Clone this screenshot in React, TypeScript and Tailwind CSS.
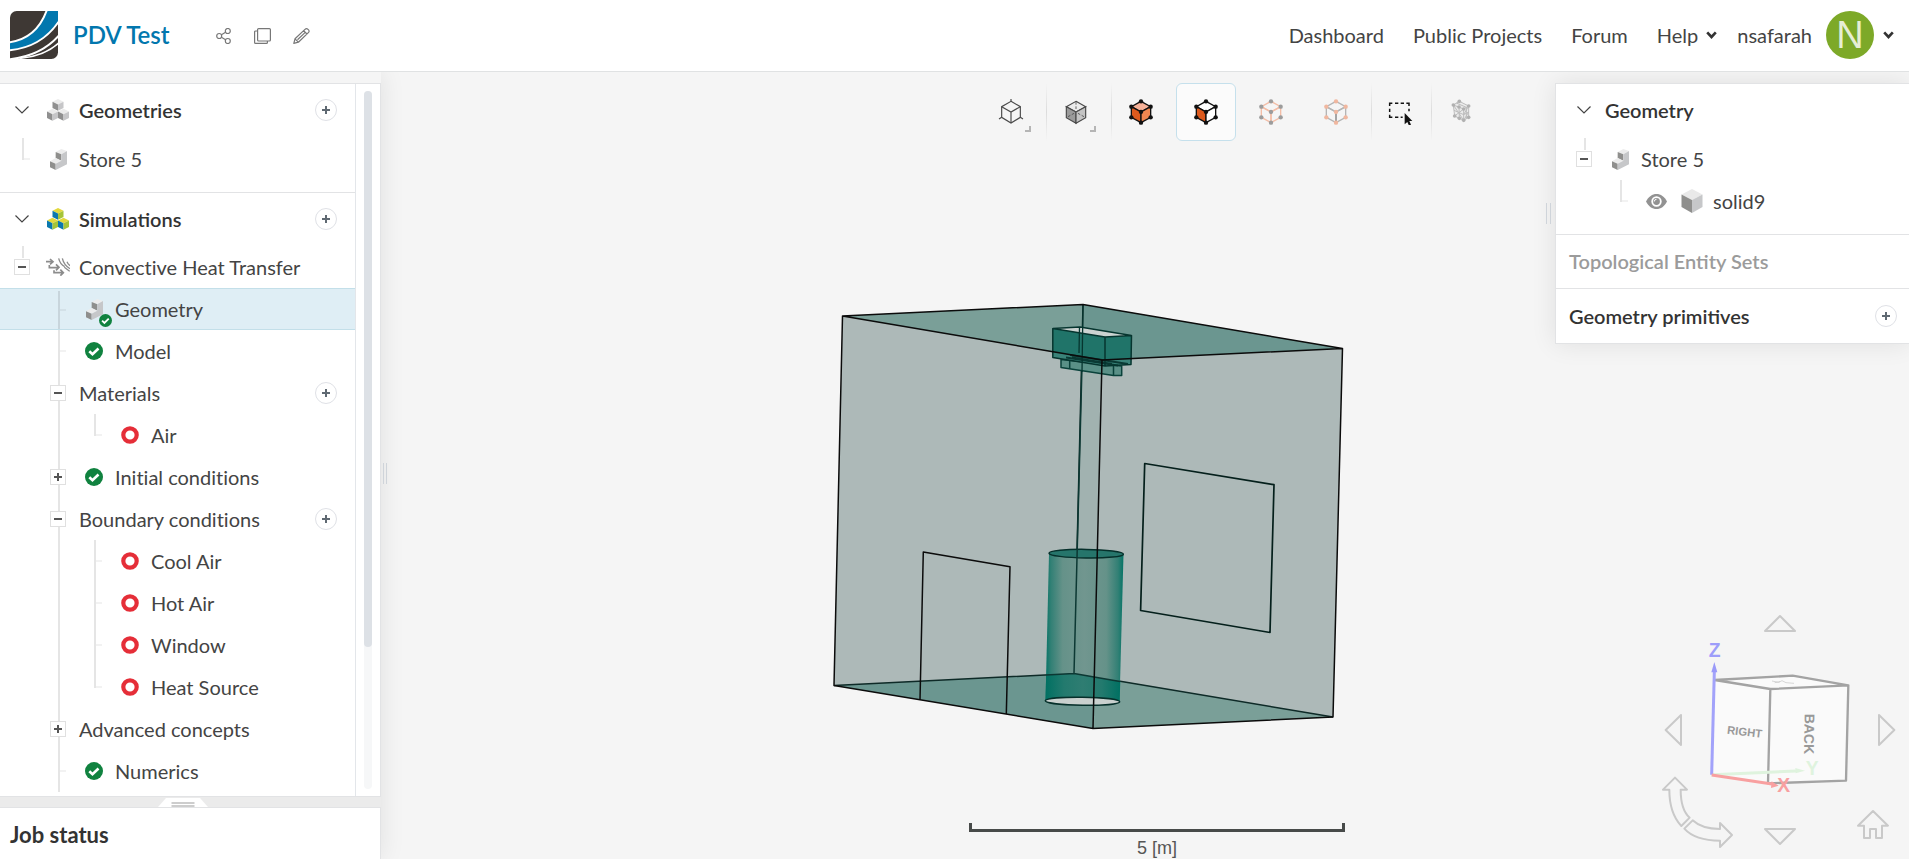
import type { ReactNode } from "react";

type Shades = { top: string; left: string; right: string };
const GREY: Shades = { top: "#ebebeb", left: "#8f8f8f", right: "#c6c6c8" };
const COLOR: Shades = { top: "#e2d83c", left: "#0b78ae", right: "#a6c437" };

function Cube({ x, y, s, shades }: { x: number; y: number; s: number; shades: Shades }) {
  const h = s / 2;
  const d = s * 1.15;
  const pts = (list: number[][]) => list.map(([a, b]) => `${x + a},${y + b}`).join(" ");
  return (
    <g>
      <polygon fill={shades.top} points={pts([[0, 0], [s, h], [0, s], [-s, h]])} />
      <polygon fill={shades.left} points={pts([[-s, h], [0, s], [0, s + d], [-s, h + d]])} />
      <polygon fill={shades.right} points={pts([[s, h], [0, s], [0, s + d], [s, h + d]])} />
    </g>
  );
}

function CubesIcon({ shades }: { shades: Shades }) {
  return (
    <svg width="22" height="22" viewBox="0 0 22 22" aria-hidden="true">
      <Cube x={11} y={0} s={5.5} shades={shades} />
      <Cube x={5.5} y={9.8} s={5.5} shades={shades} />
      <Cube x={16.5} y={9.8} s={5.5} shades={shades} />
    </svg>
  );
}

function PartIcon() {
  return (
    <svg width="17" height="21" viewBox="150 447 51 63" aria-hidden="true">
      <polygon fill="#ececec" points="167,456 184,447 201,453 184,463" />
      <polygon fill="#8f8f8d" points="167,456 184,463 184,482 167,474" />
      <polygon fill="#ececec" points="150,484 167,474 184,482 167,491" />
      <polygon fill="#8f8f8d" points="150,484 167,491 167,510 150,502" />
      <polygon fill="#c6c7c9" points="184,463 201,453 201,493 167,510 167,491 184,482" />
    </svg>
  );
}

function SolidIcon() {
  return (
    <svg width="22" height="24" viewBox="0 0 22 24" aria-hidden="true">
      <polygon fill="#e9e9e9" points="11,0 21.5,5.5 11,11 0.5,5.5" />
      <polygon fill="#8f8f8d" points="0.5,5.5 11,11 11,24 0.5,18" />
      <polygon fill="#c6c7c9" points="21.5,5.5 11,11 11,24 21.5,18" />
    </svg>
  );
}

function ConvectionIcon() {
  return (
    <svg width="24" height="18" viewBox="140 776 72 54" fill="none" stroke="#8c8c8c" strokeWidth="5" aria-hidden="true">
      <path d="M140 787h18M152 779l9 8-9 8M150 797v8h26M170 795l9 9-9 9M164 813v7h27M183 811l9 9-9 9" />
      <path d="M178 777c3 12 8 20 18 25M189 777c3 13 11 24 23 31M203 787c2 5 5 9 9 12M195 804l16 12" strokeWidth="4" />
    </svg>
  );
}

function CheckIcon({ className = "size-[18px]" }: { className?: string }) {
  return (
    <svg className={className} viewBox="0 0 18 18" aria-hidden="true">
      <circle cx="9" cy="9" r="9" fill="#10823f" />
      <path d="M4.3 9.2l3.2 3.1 6-5.8" fill="none" stroke="#fff" strokeWidth="2.6" />
    </svg>
  );
}

function RingIcon() {
  return (
    <svg className="size-[18px]" viewBox="0 0 18 18" aria-hidden="true">
      <circle cx="9" cy="9" r="6.7" fill="#fff" stroke="#e52e38" strokeWidth="4.2" />
    </svg>
  );
}

function GeometryDoneIcon() {
  return (
    <span className="relative flex">
      <PartIcon />
      <CheckIcon className="absolute -right-[9px] -bottom-[7px] size-[13px]" />
    </span>
  );
}

function EyeIcon() {
  return (
    <svg width="21" height="15" viewBox="0 0 21 15" aria-hidden="true">
      <path d="M0 7.5C2.5 2.5 6.3 0 10.500 0S18.500 2.500 21 7.500C18.500 12.500 14.700 15 10.500 15S2.500 12.500 0 7.500z" fill="#929292" />
      <circle cx="10.500" cy="7.500" r="4.300" fill="#929292" stroke="#fff" strokeWidth="1.800" />
      <path d="M10.500 5.300a2.200 2.200 0 0 0-2.200 2.200" fill="none" stroke="#fff" />
    </svg>
  );
}

function Chevron() {
  return (
    <svg width="14" height="8" viewBox="0 0 14 8" fill="none" stroke="#444" strokeWidth="1.2" aria-hidden="true">
      <path d="M0.500 0.500L7 7L13.500 0.500" />
    </svg>
  );
}

function NavChevron() {
  return (
    <svg width="11" height="8" viewBox="0 0 11 8" fill="none" stroke="#333" strokeWidth="2.600" aria-hidden="true">
      <path d="M1.200 1.300l4.300 4.700 4.300-4.700" />
    </svg>
  );
}

function AddButton({ label }: { label: string }) {
  return (
    <button type="button" aria-label={label} className="flex size-[22px] items-center justify-center rounded-full border border-[#dfe1e6] bg-white">
      <svg width="8" height="8" viewBox="0 0 8 8" stroke="#5f6972" strokeWidth="2" aria-hidden="true">
        <path d="M4 0v8M0 4h8" />
      </svg>
    </button>
  );
}

function Toggle({ open, label }: { open: boolean; label: string }) {
  return (
    <button type="button" aria-label={label} aria-expanded={open} className="relative flex size-4 items-center justify-center border border-[#e0e0e0] bg-white">
      <svg width="8" height="8" viewBox="0 0 8 8" stroke="#555" strokeWidth="2" aria-hidden="true">
        <path d={open ? "M0 4h8" : "M4 0v8M0 4h8"} />
      </svg>
    </button>
  );
}

type Guide = "none" | "line" | "tick" | "end" | "top" | "stub";

function GuideCell({ guide, children }: { guide: Guide; children?: ReactNode }) {
  const span =
    guide === "line" || guide === "tick" ? "inset-y-0" : guide === "end" ? "top-0 h-[22px]" : guide === "stub" ? "top-0 h-3" : "top-0.5 bottom-0";
  return (
    <span className="relative flex w-9 shrink-0 items-center justify-center self-stretch">
      {guide !== "none" && <span className={`absolute left-[18px] w-0.5 bg-black/10 ${span}`} />}
      {(guide === "tick" || guide === "end" || guide === "top") && (
        <span className="absolute top-5 left-5 h-0.5 w-1.5 bg-black/5" />
      )}
      {children}
    </span>
  );
}

type Row = {
  text: string;
  guides: Guide[];
  icon?: ReactNode;
  toggle?: boolean;
  add?: boolean;
  selected?: boolean;
};

const ROWS: Row[] = [
  { text: "Convective Heat Transfer", guides: ["stub"], toggle: true, icon: <ConvectionIcon /> },
  { text: "Geometry", guides: ["none", "top"], icon: <GeometryDoneIcon />, selected: true },
  { text: "Model", guides: ["none", "tick"], icon: <CheckIcon /> },
  { text: "Materials", guides: ["none", "line"], toggle: true, add: true },
  { text: "Air", guides: ["none", "line", "end"], icon: <RingIcon /> },
  { text: "Initial conditions", guides: ["none", "line"], toggle: false, icon: <CheckIcon /> },
  { text: "Boundary conditions", guides: ["none", "line"], toggle: true, add: true },
  { text: "Cool Air", guides: ["none", "line", "tick"], icon: <RingIcon /> },
  { text: "Hot Air", guides: ["none", "line", "tick"], icon: <RingIcon /> },
  { text: "Window", guides: ["none", "line", "tick"], icon: <RingIcon /> },
  { text: "Heat Source", guides: ["none", "line", "end"], icon: <RingIcon /> },
  { text: "Advanced concepts", guides: ["none", "line"], toggle: false },
  { text: "Numerics", guides: ["none", "tick"], icon: <CheckIcon /> },
];

function TreeRow({ row }: { row: Row }) {
  return (
    <li className={`flex h-[42px] items-center pr-[18px] pl-1 ${row.selected ? "border-y border-[#c3dfe9] bg-[#dfeef5]" : ""}`}>
      {row.guides.map((guide, i) => (
        <GuideCell key={i} guide={guide}>
          {i === row.guides.length - 1 && row.toggle !== undefined && <Toggle open={row.toggle} label={`Toggle ${row.text}`} />}
        </GuideCell>
      ))}
      {row.icon && <span className="flex w-9 shrink-0 justify-center">{row.icon}</span>}
      <span className="grow pl-[3px]">{row.text}</span>
      {row.add && <AddButton label={`Add ${row.text}`} />}
    </li>
  );
}

function SectionHead({ title, shades }: { title: string; shades: Shades }) {
  return (
    <h2 className="flex h-[53px] items-center pr-[18px] pb-px pl-1 font-semibold text-[#333] [font-variant-ligatures:normal]">
      <button type="button" aria-label={`Collapse ${title}`} className="flex w-9 justify-center">
        <Chevron />
      </button>
      <span className="flex w-9 justify-center">
        <CubesIcon shades={shades} />
      </span>
      <span className="grow pl-[3px]">{title}</span>
      <AddButton label={`Add ${title}`} />
    </h2>
  );
}

const HEX = "0,-32 28,-16 28,16 0,33 -28,16 -28,-16";
const CORNERS = [[0, -32], [29, -16], [29, 16], [0, 32], [-29, 16], [-29, -16], [0, 0]];

function CubeTool({ edge, dot, front, side, top, centre }: { edge: string; dot?: string; front: string; side: string; top: string; centre?: string }) {
  return (
    <svg width="26" height="26" viewBox="-39 -39 78 78" strokeWidth="4" stroke={edge} aria-hidden="true">
      <polygon points="0,-32 29,-16 0,0 -29,-16" fill={top} />
      <polygon points="-29,-16 0,0 0,32 -29,16" fill={front} />
      <polygon points="29,-16 0,0 0,32 29,16" fill={side} />
      {centre && <path d="M0 0V32" stroke={centre} />}
      {dot && CORNERS.map(([x, y]) => <circle key={`${x},${y}`} cx={x} cy={y} r="6.500" fill={dot} stroke="none" />)}
    </svg>
  );
}

function AxisCubeTool() {
  return (
    <svg width="26" height="26" viewBox="-39 -39 78 78" strokeWidth="3.500" stroke="#4a4a4a" fill="none" aria-hidden="true">
      <polygon points={HEX} />
      <path d="M-28-16L0 0 28-16M0 0V33M0-32V-39M-28 16l-8 5M28 16l8 5" />
    </svg>
  );
}

function ShadedCubeTool() {
  return (
    <svg width="26" height="26" viewBox="-39 -39 78 78" strokeWidth="3.500" stroke="#4a4a4a" fill="none" aria-hidden="true">
      <polygon points="0,-32 29,-16 0,0 -29,-16" fill="#ececec" />
      <polygon points="-29,-16 0,0 0,34 -29,17" fill="#9b9b9b" />
      <polygon points="29,-16 0,0 0,34 29,17" fill="#c4c4c4" />
      <path d="M0-30V-4M-24 14l20-11M24 14L4 3" strokeWidth="2.500" strokeDasharray="8 5" />
    </svg>
  );
}

function MeshTool() {
  const dots = [[-31, -21], [-13, -32], [15, -18], [15, 16], [0, 25], [-27, 12], [0, -9], [-13, 19], [-14, -15]];
  return (
    <svg width="26" height="26" viewBox="-47 -39 78 78" strokeWidth="3" stroke="#bdbdbd" fill="none" aria-hidden="true">
      <polygon points="-31,-21 -13,-32 15,-18 15,16 0,25 -27,12" fill="#ebebeb" />
      <path d="M-31-21L0-9 15-18M0-9V25M-29-5L0 8 15 0M-14-15L-13 19M-31-21L0 25M-27 12L0-9M-22-27L8-14M0 8l15-26M0 25L15 0M8-14V20" />
      {dots.map(([x, y]) => (
        <circle key={`${x},${y}`} cx={x} cy={y} r="5.500" fill="#b1b1b1" stroke="none" />
      ))}
    </svg>
  );
}

function BoxSelectTool() {
  return (
    <svg width="26" height="26" viewBox="-39 -39 78 78" fill="none" stroke="#111" strokeWidth="4.500" aria-hidden="true">
      <path d="M-34-18v-8h8M-18-26h10M-1-26h10M16-26h8v8M-34-10v10M24-10v8M-34 8v8h8M-18 16h10M-1 16h6" />
      <path d="M11 3V37l8-7 5 11 6-3-5-11h9z" fill="#111" stroke="none" />
    </svg>
  );
}

type Tool = { label: string; icon: ReactNode; menu?: boolean; divided?: boolean; active?: boolean };

const TOOLS: Tool[] = [
  { label: "Standard views", icon: <AxisCubeTool />, menu: true },
  { label: "Render mode", icon: <ShadedCubeTool />, menu: true, divided: true },
  { label: "Select volumes", icon: <CubeTool edge="#111" dot="#111" front="#dd5a1e" side="#ef8650" top="#f6b198" />, divided: true },
  { label: "Select faces", icon: <CubeTool edge="#111" dot="#111" front="#dd5a1e" side="#fff" top="#fff" />, active: true },
  { label: "Select edges", icon: <CubeTool edge="#f3bda6" dot="#9c9c9c" front="none" side="none" top="none" /> },
  { label: "Select vertices", icon: <CubeTool edge="#b5b5b5" dot="#f0b79f" front="none" side="none" top="none" centre="#999" /> },
  { label: "Box selection", icon: <BoxSelectTool />, divided: true },
];

function ToolButton({ tool }: { tool: Tool }) {
  return (
    <div className="relative flex h-[58px] w-[60px]">
      {tool.divided && <span className="absolute inset-y-0 left-0 w-px bg-linear-to-b from-transparent via-[#dcdcdc] to-transparent" />}
      <button
        type="button"
        aria-label={tool.label}
        className={`flex grow items-center justify-center ${tool.active ? "rounded-md border border-[#c5e0ec] bg-[#fbfbfb]" : ""}`}
      >
        {tool.icon}
      </button>
      {tool.menu && <span className="absolute right-2.5 bottom-[9px] size-1.5 border-r-2 border-b-2 border-[#b5b5b5]" />}
    </div>
  );
}

function RoomModel() {
  return (
    <svg className="absolute inset-0 h-full w-full" viewBox="0 72 1909 787" fill="none" strokeWidth="1.500" strokeLinejoin="round" role="img" aria-label="Room geometry">
      <defs>
        <linearGradient id="tube">
          <stop offset="0" stopColor="#047466" />
          <stop offset="0.070" stopColor="#328075" />
          <stop offset="0.220" stopColor="#659289" />
          <stop offset="0.500" stopColor="#71968f" />
          <stop offset="0.780" stopColor="#659289" />
          <stop offset="0.930" stopColor="#328075" />
          <stop offset="1" stopColor="#047466" />
        </linearGradient>
        <linearGradient id="tubeBase">
          <stop offset="0" stopColor="#007062" />
          <stop offset="0.250" stopColor="#237a6e" />
          <stop offset="0.500" stopColor="#2f7d72" />
          <stop offset="0.750" stopColor="#237a6e" />
          <stop offset="1" stopColor="#007062" />
        </linearGradient>
      </defs>
      <polygon fill="#adb9b8" points="842.500,316 1083,304.500 1342.500,348.500 1333,717 1093,728.500 834,685.500" />
      <polygon fill="#a1b2b0" points="1081.500,357 1102,360 1093,728.500 1074,673.500" />
      <polygon fill="#7a9f98" points="842.500,316 1083,304.500 1082,357" />
      <polygon fill="#6b9690" points="1083,304.500 1342.500,348.500 1102,360 1081.500,357" />
      <polygon fill="#6b9690" points="834,685.500 1074,673.500 1094,677 1093,728.500" />
      <polygon fill="#7a9f98" points="1094,676.500 1333,717 1093,728.500" />

      <g stroke="#0e2a27">
        <path d="M1083 304.500L1074 673.500M834 685.500L1074 673.500 1333 717" />
        <path d="M1144.700 463.500L1274 484.700 1270 632.500 1140.600 610.500Z" stroke="#041f1b" strokeWidth="1.700" />
      </g>

      <polygon fill="url(#tube)" points="1049,554 1123.500,554 1119.500,702 1045.500,701" />
      <polygon fill="url(#tubeBase)" points="1046.200,675 1074,673.500 1120.300,681.500 1119.600,702 1045.500,701" />
      <ellipse cx="1086.200" cy="553.700" rx="37.200" ry="4.300" fill="#26756b" stroke="#06302b" transform="rotate(0.800 1086 554)" />
      <ellipse cx="1082.500" cy="701.200" rx="37.200" ry="4" fill="#c9d0ce" stroke="#06302b" transform="rotate(0.800 1082 701)" />
      <path d="M1082 365L1074 673.500 1120 681.500M1046 675L1074 673.500" stroke="#0c3833" />

      <polygon fill="#5a9087" points="1061,359.500 1061,367.500 1113.500,375.500 1121.700,375.500 1121.700,366" stroke="#0a423b" />
      <path d="M1069.700 360V369M1113.500 366V375.500" stroke="#0a423b" />
      <polygon fill="#3a8379" points="1052.800,328.500 1105,337 1131.500,335.500 1131,364.500 1105,366 1052.800,357.500" />
      <polygon fill="#207469" points="1079,333 1105,337 1131.500,335.500 1131,358.500 1102,360 1052.800,352 1052.800,328.500" />
      <polygon fill="#cbd3d1" points="1052.800,328.500 1080,327 1131.500,335.500 1105,337" />
      <path d="M1070 355L1128 364M1066 357.500L1118 365.500M1072 357.500L1112 364" stroke="#0a3a34" strokeWidth="2" />
      <path d="M1052.800 328.500L1105 337 1131.500 335.500 1131 364.500 1105 366 1052.800 357.500Z M1105 337V366M1052.800 328.500L1080 327 1131.500 335.500" stroke="#06352f" />
      <path d="M1083 304.500L1082 372M1079.500 327L1079 353" stroke="#06352f" strokeWidth="1.300" />

      <g stroke="#0b0b0b">
        <path d="M842.500 316L1083 304.500 1342.500 348.500 1102 360ZM842.500 316L834 685.500 1093 728.500 1333 717 1342.500 348.500M1102 360L1093 728.500" />
        <path d="M920 700L923.300 552 1010 566.700 1006.300 714" />
      </g>
    </svg>
  );
}

function NavigationCube() {
  return (
    <svg width="269" height="259" viewBox="0 0 807 777" fill="none" strokeLinejoin="round" role="img" aria-label="View orientation">
      <g stroke="#c9c9c9" strokeWidth="6">
        <path d="M420 48L465 93H375ZM420 732L465 687H375ZM77 390L123 345V435ZM763 390L717 345V435Z" />
        <path d="M105 533L141 569H122C122 604 130 636 149 653L124 678C98 650 88 612 88 569H69Z" />
        <path d="M133 686L158 661C178 680 205 687 240 687V669L276 705L240 741V722C200 722 160 716 133 686Z" />
        <path d="M699 633L744 677H726V714H708V687H690V714H672V677H654Z" />
      </g>
      <polygon points="224,240 458,227 625,256 618,542 384,550 215,525" fill="#fafafa" />
      <path d="M224 240L458 227 625 256 391 267ZM391 267L384 550 618 542 625 256" stroke="#a3a3a3" strokeWidth="7" />
      <path d="M396 243l20 4 10-5 12 6 24 2M404 248l16-3" stroke="#c4c4c4" strokeWidth="2" />
      <text x="260" y="401" transform="rotate(7 260 401)" fill="#999" fontSize="34" fontWeight="700" className="font-['Liberation_Sans_Narrow','Liberation_Sans',sans-serif]">RIGHT</text>
      <text x="494" y="341" transform="rotate(91 494 341)" fill="#999" fontSize="42" fontWeight="700" className="font-['Liberation_Sans',sans-serif]">BACK</text>
      <path d="M217 524L468 513" stroke="#dff3de" strokeWidth="9" />
      <polygon points="466,504 495,512 467,520" fill="#dff3de" />
      <path d="M215 524L223 214" stroke="#a2a2fa" strokeWidth="9" />
      <polygon points="223,186 232,217 214,217" fill="#9a9af9" />
      <path d="M215 525L396 552" stroke="#f8a0a0" strokeWidth="9" />
      <polygon points="395,544 416,557 393,564" fill="#f8a0a0" />
      <g fontSize="58" fontWeight="700" className="font-['Liberation_Sans',sans-serif]">
        <text x="206" y="171" fill="#9d9dfa">Z</text>
        <text x="497" y="524" fill="#dff3de">Y</text>
        <text x="412" y="576" fill="#f8a0a0">X</text>
      </g>
    </svg>
  );
}

function Logo() {
  return (
    <svg width="48" height="48" viewBox="0 0 144 144" aria-label="Home" role="img">
      <defs>
        <clipPath id="logo">
          <path d="M20 0H144V124A20 20 0 0 1 124 144H0V20A20 20 0 0 1 20 0Z" />
        </clipPath>
      </defs>
      <g clipPath="url(#logo)">
        <rect width="144" height="144" fill="#3e3834" />
        <path d="M110-4C94 44 60 88-4 96V117C70 112 122 72 150 26V-4Z" fill="#0277ae" />
        <g fill="none" stroke="#fff" strokeWidth="6">
          <path d="M111-4C94 44 60 86-4 94" />
          <path d="M-4 118C70 112 118 76 150 26" />
          <path d="M-4 145C70 138 118 108 150 70" />
        </g>
        <path d="M28 142C80 138 118 122 148 94" fill="none" stroke="#fff" strokeWidth="5" />
      </g>
    </svg>
  );
}

function Header() {
  return (
    <header className="z-10 flex h-[72px] shrink-0 items-center border-b border-[#e0e2e3] bg-white pr-[15px] pb-0.5 pl-2.5">
      <a href="#home">
        <Logo />
      </a>
      <h1 className="ml-[15px] text-2xl font-semibold text-[#0277ae]">PDV Test</h1>
      <div className="ml-[46px] flex gap-[22px] pt-0.5">
        <button type="button" aria-label="Share">
          <svg width="16" height="16" viewBox="0 0 16 16" fill="none" stroke="#777" strokeWidth="1.200" aria-hidden="true">
            <circle cx="3.200" cy="8" r="2.500" />
            <circle cx="11.800" cy="3" r="2.500" />
            <circle cx="11.800" cy="13" r="2.500" />
            <path d="M5.400 6.800L9.600 4.300M5.400 9.200L9.600 11.700" />
          </svg>
        </button>
        <button type="button" aria-label="Copy">
          <svg width="17" height="16" viewBox="0 0 17 16" fill="none" stroke="#777" strokeWidth="1.200" aria-hidden="true">
            <rect x="3.600" y="0.600" width="12.800" height="12.400" rx="1" />
            <path d="M3.600 3H1.600a1 1 0 0 0-1 1V14.400a1 1 0 0 0 1 1H12.400a1 1 0 0 0 1-1V13" />
          </svg>
        </button>
        <button type="button" aria-label="Rename">
          <svg width="17" height="16" viewBox="0 0 17 16" fill="none" stroke="#777" strokeWidth="1.200" strokeLinejoin="round" aria-hidden="true">
            <path d="M0.800 15.400L2 10.800 12 1.400C13 0.500 14 0.500 15 1.400S16.600 3.400 15.600 4.400L5.400 14.200ZM2 10.800L5.400 14.200M10.600 2.800L14 6M4.500 11.800L12 4.600" />
          </svg>
        </button>
      </div>
      <nav className="ml-auto flex items-center">
        <a href="#dashboard" className="mr-[29px]">Dashboard</a>
        <a href="#projects" className="mr-[29px]">Public Projects</a>
        <a href="#forum" className="mr-[29px]">Forum</a>
        <button type="button" className="flex items-center gap-2">
          Help <NavChevron />
        </button>
        <button type="button" className="ml-5 flex items-center">
          nsafarah
          <span className="mr-[9px] ml-[14px] flex size-12 items-center justify-center rounded-full bg-[#7da928] font-['Liberation_Sans',sans-serif] text-[38px] leading-none text-[#e6eed4]">N</span>
          <NavChevron />
        </button>
      </nav>
    </header>
  );
}

export default function App() {
  return (
    <div className="flex h-screen flex-col overflow-hidden bg-[#f5f5f5] font-[Lato,sans-serif] text-[20px] leading-6 text-[#444] [font-variant-ligatures:none]">
      <Header />
      <main className="relative flex min-h-0 grow">
        <RoomModel />

        <div className="relative flex w-[381px] shrink-0 flex-col pt-[11px] shadow-[0_0_24px_rgba(0,0,0,0.09)]">
          <aside className="flex min-h-0 grow overflow-hidden border border-l-0 border-[#e2e3e5] bg-white">
            <div className="min-w-0 grow border-r border-[#e3e6ea]">
              <section className="border-b border-[#e2e3e5]">
                <SectionHead title="Geometries" shades={GREY} />
                <ul className="pt-px pb-3">
                  <TreeRow row={{ text: "Store 5", guides: ["end"], icon: <PartIcon /> }} />
                </ul>
              </section>
              <section>
                <SectionHead title="Simulations" shades={COLOR} />
                <ul>
                  {ROWS.map((row) => (
                    <TreeRow key={row.text} row={row} />
                  ))}
                </ul>
              </section>
            </div>
            <div className="w-6 shrink-0 px-2 py-[7px]">
              <div className="h-full rounded-full bg-[#f6f7f8]">
                <div className="h-[79.600%] rounded-full bg-[#dde1e6]" />
              </div>
            </div>
          </aside>
          <div className="flex h-2.5 shrink-0 justify-center bg-[#ebebeb] pr-4">
            <svg width="50" height="10" viewBox="0 0 50 10" aria-hidden="true">
              <path d="M0 10L8 1H42L50 10Z" fill="#fff" />
              <path d="M13.500 6H36.500M13.500 9H36.500" stroke="#bdbdbd" strokeWidth="1.500" />
            </svg>
          </div>
          <section className="h-[52px] shrink-0 border-t border-r border-[#e2e3e5] bg-white px-2.5 pt-[15px] text-[22px] font-bold text-[#333]">
            <h2>Job status</h2>
          </section>
          <span className="absolute top-[391px] -right-1.5 h-[21px] w-1 border-x border-[#cfd4da]" />
        </div>

        <div className="relative flex min-w-0 grow flex-col items-end justify-between pt-[11px]">
          <div className="mr-16 flex" role="toolbar" aria-label="Viewer tools">
            <div className="flex gap-[5px]">
              {TOOLS.map((tool) => (
                <ToolButton key={tool.label} tool={tool} />
              ))}
            </div>
            <ToolButton tool={{ label: "Mesh clip", icon: <MeshTool />, divided: true }} />
          </div>
          <div className="mr-[210px] flex w-[376px] flex-col items-center font-['Liberation_Sans',sans-serif] text-lg leading-[22px] text-[#555]">
            <div className="h-[9px] w-full border-x-[3px] border-b-[3px] border-[#474a49]" />
            <span className="mt-[5px]">5 [m]</span>
          </div>
        </div>

        <div className="relative flex w-[354px] shrink-0 flex-col justify-between pt-[11px]">
          <span className="absolute top-[131px] -left-[9px] h-[21px] w-[5px] border-x border-[#cfd4da]" />
          <aside className="border border-r-0 border-[#e2e3e5] bg-white shadow-[0_0_24px_rgba(0,0,0,0.09)]">
            <section className="border-b border-[#e2e3e5]">
              <h2 className="flex h-[53px] items-center pb-px pl-[21px] font-semibold text-[#333]">
                <button type="button" aria-label="Collapse Geometry">
                  <Chevron />
                </button>
                <span className="pl-[14px]">Geometry</span>
              </h2>
              <ul className="pt-px pb-3">
                <li className="flex h-[42px] items-center pl-2.5">
                  <GuideCell guide="stub">
                    <Toggle open label="Toggle Store 5" />
                  </GuideCell>
                  <span className="flex w-9 justify-center">
                    <PartIcon />
                  </span>
                  <span className="pl-[3px]">Store 5</span>
                </li>
                <li className="flex h-[42px] items-center pl-[46px]">
                  <GuideCell guide="end" />
                  <button type="button" aria-label="Hide solid9" className="flex w-9 justify-center">
                    <EyeIcon />
                  </button>
                  <span className="flex w-9 justify-center">
                    <SolidIcon />
                  </span>
                  <span className="pl-[3px]">solid9</span>
                </li>
              </ul>
            </section>
            <h2 className="flex h-[54px] items-center border-b border-[#e2e3e5] px-[13px] pb-px font-semibold text-[#9b9b9b] [font-variant-ligatures:normal]">Topological Entity Sets</h2>
            <h2 className="flex h-[54px] items-center justify-between pr-3 pb-px pl-[13px] font-semibold text-[#333] [font-variant-ligatures:normal]">
              Geometry primitives
              <AddButton label="Add Geometry primitive" />
            </h2>
          </aside>
          <div className="self-end">
            <NavigationCube />
          </div>
        </div>
      </main>
    </div>
  );
}
